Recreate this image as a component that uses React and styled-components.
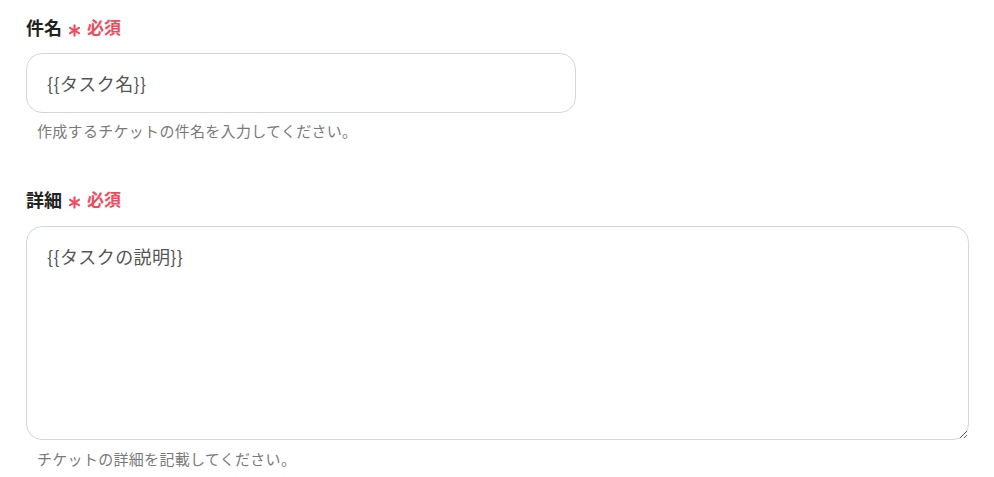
import React from "react";
import styled, { createGlobalStyle } from "styled-components";

const COLOR = {
  TEXT: "#222222",
  RED: "#f2495d",
  VALUE: "#555555",
  HELP: "#7a7a7a",
  BORDER: "#d3d6dc",
};

const GlobalStyle = createGlobalStyle`
  html, body {
    margin: 0;
    padding: 0;
    background-color: #ffffff;
  }
  body {
    font-family: "Noto Sans CJK JP", "Noto Sans", sans-serif;
  }
`;

const RequiredMark = () => (
  <StyledMark width="13" height="13" viewBox="0 0 14 14">
    <g stroke={COLOR.RED} strokeWidth="2.3" strokeLinecap="round">
      <line x1="7" y1="1.5" x2="7" y2="12.5" />
      <line x1="2.2" y1="4.2" x2="11.8" y2="9.8" />
      <line x1="2.2" y1="9.8" x2="11.8" y2="4.2" />
    </g>
  </StyledMark>
);

const FieldLabel = ({ children, $bottom }) => (
  <StyledLabelRow $bottom={$bottom}>
    <StyledLabelText>{children}</StyledLabelText>
    <RequiredMark />
    <StyledRequired>必須</StyledRequired>
  </StyledLabelRow>
);

const App = () => {
  return (
    <>
      <GlobalStyle />
      <StyledPage>
        <StyledField>
          <FieldLabel $bottom={14}>件名</FieldLabel>
          <StyledInput readOnly value="{{タスク名}}" />
          <StyledHelp>作成するチケットの件名を入力してください。</StyledHelp>
        </StyledField>
        <StyledField $gap={45}>
          <FieldLabel $bottom={15}>詳細</FieldLabel>
          <StyledTextArea readOnly value="{{タスクの説明}}" />
          <StyledHelp $top={8}>チケットの詳細を記載してください。</StyledHelp>
        </StyledField>
      </StyledPage>
    </>
  );
};

export default App;

const StyledPage = styled.div`
  display: flex;
  flex-direction: column;
  padding: 15px 25px 0 26px;
`;

const StyledField = styled.div`
  display: flex;
  flex-direction: column;
  align-items: flex-start;
  margin-top: ${({ $gap }) => $gap || 0}px;
`;

const StyledLabelRow = styled.div`
  display: flex;
  align-items: center;
  height: 24px;
  margin-bottom: ${({ $bottom }) => $bottom}px;
`;

const StyledLabelText = styled.span`
  font-size: 18px;
  font-weight: 700;
  color: ${COLOR.TEXT};
  line-height: 24px;
`;

const StyledMark = styled.svg`
  margin: 7px 6px 0 6px;
`;

const StyledRequired = styled.span`
  font-size: 17px;
  font-weight: 700;
  color: ${COLOR.RED};
  line-height: 24px;
`;

const StyledInput = styled.input`
  box-sizing: border-box;
  width: 550px;
  height: 60px;
  padding: 0 20px;
  border: 1px solid ${COLOR.BORDER};
  border-radius: 16px;
  font-family: "Noto Sans CJK JP", "Noto Sans", sans-serif;
  font-size: 18px;
  letter-spacing: 0.4px;
  color: ${COLOR.VALUE};
  background-color: #ffffff;
  outline: none;
`;

const StyledTextArea = styled.textarea`
  box-sizing: border-box;
  width: 100%;
  height: 214px;
  margin: 0;
  padding: 16px 20px;
  border: 1px solid ${COLOR.BORDER};
  border-radius: 16px;
  font-family: "Noto Sans CJK JP", "Noto Sans", sans-serif;
  font-size: 18px;
  letter-spacing: 0.4px;
  line-height: 27px;
  color: ${COLOR.VALUE};
  background-color: #ffffff;
  outline: none;
  resize: vertical;
  display: block;
`;

const StyledHelp = styled.p`
  margin: ${({ $top }) => $top || 7}px 0 0;
  padding-left: 11px;
  font-size: 15px;
  letter-spacing: 0.3px;
  line-height: 22px;
  color: ${COLOR.HELP};
`;
